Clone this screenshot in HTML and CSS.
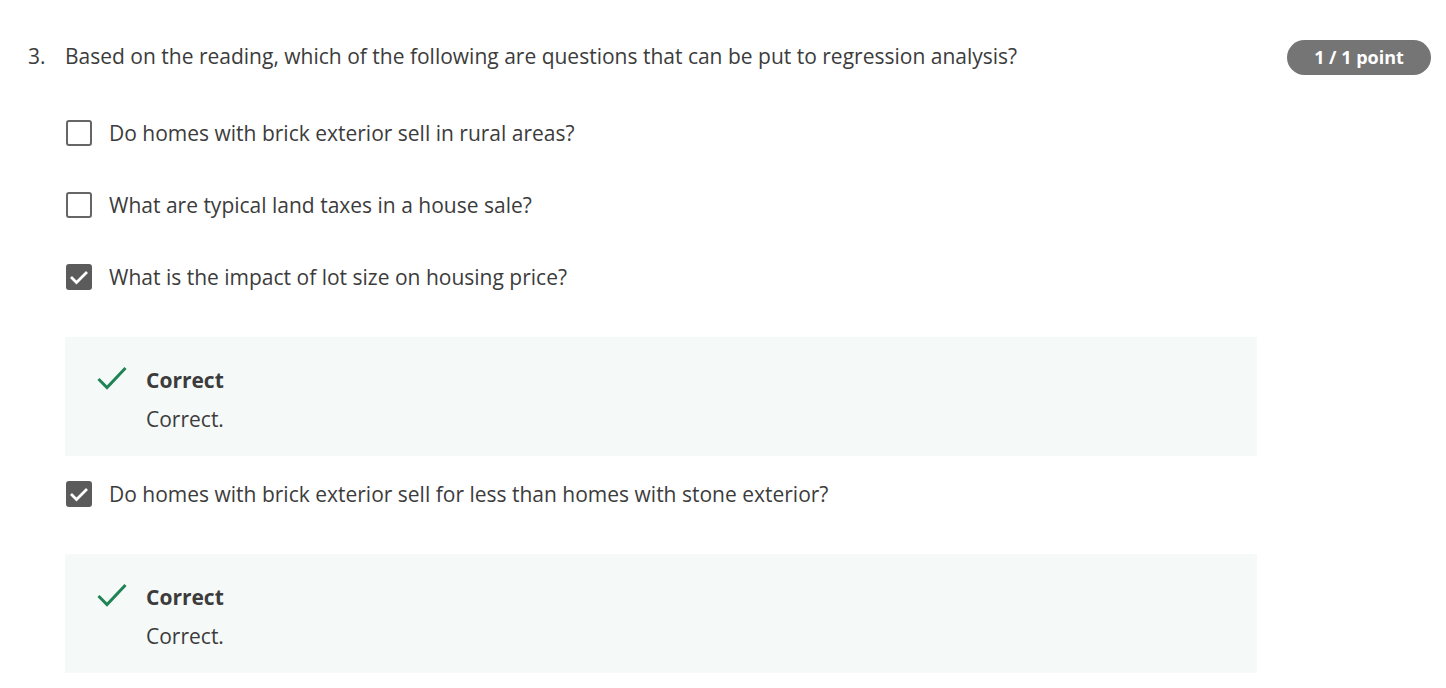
FILE: index.html
```html
<!DOCTYPE html>
<html>
<head>
<meta charset="utf-8">
<link rel="stylesheet" href="styles.css">
</head>
<body>
<div class="question">
  <div class="q-head">
    <div class="q-num">3.</div>
    <div class="q-text">Based on the reading, which of the following are questions that can be put to regression analysis?</div>
    <div class="badge">1 / 1 point</div>
  </div>
  <div class="options">
    <div class="option">
      <span class="box"></span>
      <span class="opt-text">Do homes with brick exterior sell in rural areas?</span>
    </div>
    <div class="option">
      <span class="box"></span>
      <span class="opt-text">What are typical land taxes in a house sale?</span>
    </div>
    <div class="option">
      <span class="box checked"><svg viewBox="0 0 26 26" width="26" height="26"><path d="M5 13 L10.5 18.5 L21 8" fill="none" stroke="#fff" stroke-width="2.8"/></svg></span>
      <span class="opt-text">What is the impact of lot size on housing price?</span>
    </div>
    <div class="feedback">
      <svg class="tick" viewBox="0 0 30 24" width="30" height="24"><path d="M1.5 13 L10 21.5 L28.5 2" fill="none" stroke="#1f8354" stroke-width="3"/></svg>
      <div class="fb-body">
        <div class="fb-title">Correct</div>
        <div class="fb-text">Correct.</div>
      </div>
    </div>
    <div class="option opt-after">
      <span class="box checked"><svg viewBox="0 0 26 26" width="26" height="26"><path d="M5 13 L10.5 18.5 L21 8" fill="none" stroke="#fff" stroke-width="2.8"/></svg></span>
      <span class="opt-text">Do homes with brick exterior sell for less than homes with stone exterior?</span>
    </div>
    <div class="feedback">
      <svg class="tick" viewBox="0 0 30 24" width="30" height="24"><path d="M1.5 13 L10 21.5 L28.5 2" fill="none" stroke="#1f8354" stroke-width="3"/></svg>
      <div class="fb-body">
        <div class="fb-title">Correct</div>
        <div class="fb-text">Correct.</div>
      </div>
    </div>
  </div>
</div>
</body>
</html>
```
FILE: styles.css
```css
html, body {
  margin: 0;
  padding: 0;
  background: #fff;
}
body {
  font-family: "Open Sans", "Noto Sans", sans-serif;
  color: #3c3c3c;
  font-size: 21px;
}
.question {
  padding: 40px 15px 0 28px;
}
.q-head {
  display: flex;
  align-items: flex-start;
  height: 35px;
}
.q-num {
  width: 37px;
  line-height: 32px;
}
.q-text {
  flex: 1;
  line-height: 32px;
}
.badge {
  background: #757575;
  color: #fff;
  font-weight: 700;
  font-size: 18px;
  height: 35px;
  line-height: 35px;
  width: 144px;
  text-align: center;
  border-radius: 18px;
}
.options {
  padding-left: 37px;
  padding-top: 43px;
  width: 1192px;
}
.option {
  display: flex;
  align-items: center;
  height: 30px;
  margin-bottom: 42px;
}
.option + .feedback {
  margin-top: 45px;
}
.opt-after {
  margin-top: 23px;
  margin-bottom: 45px;
}
.box {
  box-sizing: border-box;
  width: 26px;
  height: 26px;
  border: 2.5px solid #666;
  border-radius: 3px;
  margin-left: 1px;
  margin-right: 17px;
  flex: none;
  display: flex;
}
.box.checked {
  background: #5b5b5b;
  border-color: #5b5b5b;
}
.box svg {
  margin: -2.5px;
}
.option .opt-text {
  line-height: 30px;
}
.feedback {
  background: #f5f9f8;
  height: 119px;
  box-sizing: border-box;
  padding: 29px 0 0 32px;
  display: flex;
  align-items: flex-start;
}
.tick {
  flex: none;
  margin-right: 19px;
}
.fb-title {
  font-weight: 700;
  line-height: 30px;
  margin-top: -1px;
}
.fb-text {
  line-height: 30px;
  margin-top: 9px;
}
```
